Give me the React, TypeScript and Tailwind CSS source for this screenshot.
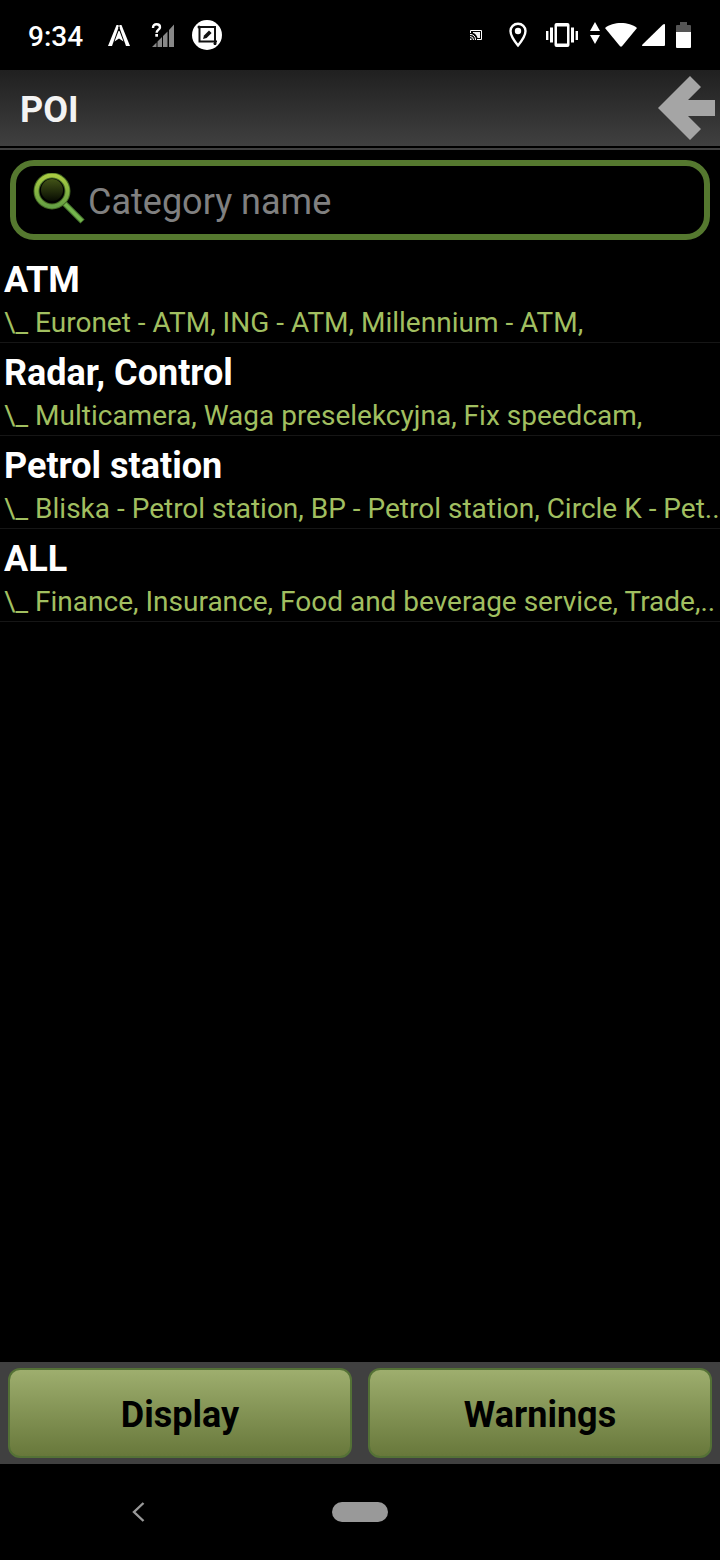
import React, { useState } from 'react';

interface Category {
  name: string;
  details: string;
}

const categories: Category[] = [
  { name: 'ATM', details: 'Euronet - ATM, ING - ATM, Millennium - ATM,' },
  { name: 'Radar, Control', details: 'Multicamera, Waga preselekcyjna, Fix speedcam,' },
  { name: 'Petrol station', details: 'Bliska - Petrol station, BP - Petrol station, Circle K - Pet..' },
  { name: 'ALL', details: 'Finance, Insurance, Food and beverage service, Trade,..' },
];

const StatusBar: React.FC = () => (
  <div className="flex h-[70px] shrink-0 items-center justify-between pl-7 pr-[29px]">
    <div className="flex items-center">
      <span className="pt-1 text-[28px] leading-8 font-medium">9:34</span>
      <svg className="ml-[25px]" width="22" height="24" viewBox="0 0 22 24" fill="#fff">
        <path d="M8.500 2h1.700v3.500L4 23H0z" />
        <path d="M13.500 2h-1.700v3.500L18 23h4z" />
        <path d="M10.500 8h1l4 10.500-4.500-3-4.500 3z" />
        <path d="M10.500 2h1v2h-1z" />
      </svg>
      <svg className="ml-[21px]" width="24" height="26" viewBox="0 0 24 26">
        <g fill="#888">
          <path d="M1 25l4.500-4.500V25zM6.500 19.500l4.500-4.500v10H6.500zM12 14l4.500-4.500V25H12zM18 8l5-5.500V25h-5z" />
        </g>
        <path d="M2 6C2 3.500 3.500 2.300 5.500 2.300S9 3.500 9 5.300c0 2.300-3.400 2.600-3.400 5.500" fill="none" stroke="#fff" strokeWidth="2.400" />
        <rect x="4.300" y="12" width="2.700" height="2.700" fill="#fff" />
      </svg>
      <svg className="ml-[17px]" width="30" height="30" viewBox="0 0 30 30">
        <circle cx="15" cy="15" r="15" fill="#fff" />
        <g fill="none" stroke="#111" strokeWidth="2">
          <path d="M6 7h17v14M7.500 7v14.500H25M23 21v4" />
        </g>
        <circle cx="7" cy="7" r="1.500" fill="#111" />
        <circle cx="23" cy="23.500" r="1.500" fill="#111" />
        <path d="M11 19l1-3.500 5-5 2.600 2.600-5 5z" fill="#111" />
      </svg>
    </div>
    <div className="flex items-center">
      <svg width="12" height="10" viewBox="0 0 12 10" fill="none" stroke="#fff">
        <path d="M.5 3V.5h11v9H7" />
        <path d="M3 2h7v6H7.500C7 5.500 5 3.300 3 3z" fill="#eee" stroke="none" />
        <path d="M0 4.500a5 5 0 0 1 5.500 5.500M0 6.500A3.500 3.500 0 0 1 3.500 10" />
        <path d="M0 8.500h1.500V10H0z" fill="#fff" stroke="none" />
      </svg>
      <svg className="ml-[27px]" width="18" height="26" viewBox="0 0 18 26">
        <path d="M9 1.800c-4.200 0-7.500 3.200-7.500 7.300C1.500 14.500 9 23.500 9 23.500s7.500-9 7.500-14.400c0-4.100-3.300-7.300-7.500-7.300z" fill="none" stroke="#fff" strokeWidth="2.400" />
        <circle cx="9" cy="9" r="3.200" fill="#fff" />
      </svg>
      <svg className="ml-[18px]" width="34" height="24" viewBox="0 0 34 24" fill="#fff">
        <path d="M1 8h2.400v9H1zM5 4.500h3v15H5zM26 4.500h3v15h-3zM30.600 8H33v9h-2.400z" />
        <path d="M11.500 0h11a2 2 0 0 1 2 2v20a2 2 0 0 1-2 2h-11a2 2 0 0 1-2-2V2a2 2 0 0 1 2-2zM12 3.500v17h10v-17z" fillRule="evenodd" />
      </svg>
      <svg className="mb-1 ml-[11px]" width="10" height="22" viewBox="0 0 10 22" fill="#fff">
        <path d="M5 0l5 9H0zM5 22l5-9H0z" />
      </svg>
      <svg className="ml-[5px]" width="32" height="24" viewBox="0 0 32 24" fill="#fff">
        <path d="M0 5C4 1.500 10 0 16 0s12 1.500 16 5L17 23.300q-1 .9-2 0z" />
      </svg>
      <svg className="ml-[5px]" width="23" height="22" viewBox="0 0 23 22" fill="#fff">
        <path d="M23 1v20q0 1-1 1H.5q-1-.5 0-1.500L21 .5q2-1.200 2 .5z" />
      </svg>
      <svg className="ml-[11px]" width="15" height="26" viewBox="0 0 15 26">
        <path d="M1 3h3V0h7v3h3q1 0 1 1v7H0V4q0-1 1-1z" fill="#555" />
        <path d="M0 10h15v15q0 1-1 1H1q-1 0-1-1z" fill="#fff" />
      </svg>
    </div>
  </div>
);

const SearchIcon: React.FC = () => (
  <svg className="shrink-0" width="54" height="54" viewBox="0 1 54 54">
    <defs>
      <linearGradient id="ring" x1="0" y1="0" x2="0" y2="1">
        <stop offset="0" stopColor="#a9cb42" />
        <stop offset="1" stopColor="#65a044" />
      </linearGradient>
      <linearGradient id="lens" x1="0" y1="0" x2="0" y2="1">
        <stop offset="0" stopColor="#425317" />
        <stop offset="1" stopColor="#080c02" />
      </linearGradient>
    </defs>
    <path d="M32 31l18.500 18.500" stroke="#4c7c32" strokeWidth="6" />
    <path d="M32 31l18 18" stroke="#75b64d" strokeWidth="3.500" />
    <circle cx="20" cy="19" r="15.500" fill="#000" stroke="#456b24" strokeWidth="6" />
    <circle cx="20" cy="19" r="15.500" fill="none" stroke="url(#ring)" strokeWidth="4" />
    <circle cx="20" cy="18" r="11" fill="url(#lens)" />
  </svg>
);

const CategoryRow: React.FC<Category> = ({ name, details }) => (
  <li className="border-b border-[#161616] pt-[9px] pb-[3px] pl-1">
    <h2 className="text-4xl leading-[42px] font-bold">{name}</h2>
    <p className="mt-[5px] overflow-hidden text-[28px] leading-[33px] whitespace-nowrap text-[#a1bf60]">
      {'\\_ '}
      {details}
    </p>
  </li>
);

const buttonClasses =
  'h-[90px] flex-1 rounded-xl border-2 border-[#547136] bg-linear-to-b from-[#9eae6e] to-[#68783b] pt-1 text-4xl font-bold text-black';

const App: React.FC = () => {
  const [query, setQuery] = useState('');
  const visible = categories.filter((c) => c.name.toLowerCase().includes(query.toLowerCase()));

  return (
    <div className="flex min-h-screen flex-col bg-black font-['Roboto',sans-serif] text-white">
      <StatusBar />

      <header className="flex h-[76px] shrink-0 items-center justify-between bg-linear-to-b from-[#202020] to-[#404040] pr-[5px] pl-5">
        <h1 className="pt-1 text-4xl font-bold text-[#f3f3f3]">POI</h1>
        <button type="button" aria-label="Back">
          <svg width="57" height="64" viewBox="0 0 57 64" fill="#a5a5a5">
            <path d="M0 32L32 0l11 11-13 13h27v16H30l13 13-11 11z" />
          </svg>
        </button>
      </header>
      <div className="mt-0.5 h-0.5 shrink-0 bg-[#404040]" />

      <main className="flex-1">
        <label className="m-2.5 flex h-20 items-center rounded-3xl border-[6px] border-[#55782f] px-4">
          <SearchIcon />
          <input
            type="text"
            aria-label="Category name"
            placeholder="Category name"
            value={query}
            onChange={(e) => setQuery(e.target.value)}
            className="ml-0.5 min-w-0 flex-1 bg-transparent pt-1 text-4xl outline-none placeholder:text-[#808080]"
          />
        </label>
        <ul>
          {visible.map((c) => (
            <CategoryRow key={c.name} name={c.name} details={c.details} />
          ))}
        </ul>
      </main>

      <div className="flex shrink-0 gap-4 bg-[#404040] px-2 py-1.5">
        <button type="button" className={buttonClasses}>Display</button>
        <button type="button" className={buttonClasses}>Warnings</button>
      </div>

      <nav className="grid h-24 shrink-0 grid-cols-[1fr_56px_1fr] items-center">
        <button type="button" aria-label="Navigate back" className="ml-[132px] justify-self-start">
          <svg width="13" height="20" viewBox="0 0 13 20" fill="none" stroke="#999" strokeWidth="2.400">
            <path d="M11.500 1L2 10l9.500 9" />
          </svg>
        </button>
        <button type="button" aria-label="Home" className="h-5 rounded-full bg-[#999]" />
      </nav>
    </div>
  );
};

export default App;
